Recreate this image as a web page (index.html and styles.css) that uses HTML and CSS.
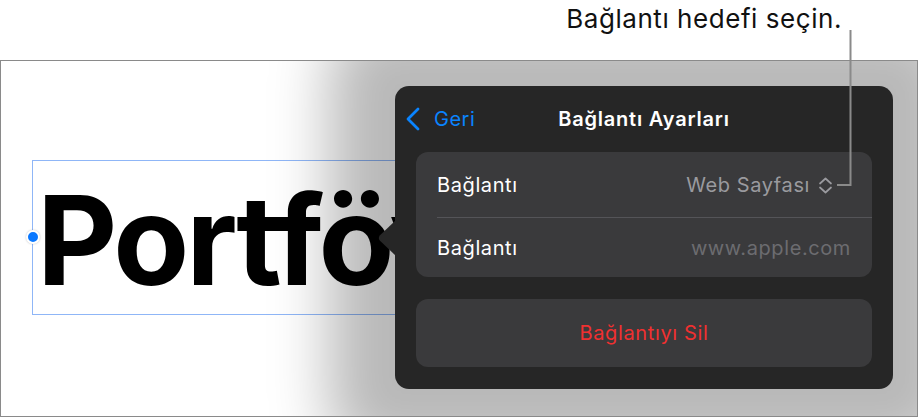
FILE: index.html
```html
<!DOCTYPE html>
<html lang="tr">
<head>
<meta charset="utf-8">
<title>Bağlantı Ayarları</title>
<link rel="stylesheet" href="styles.css">
</head>
<body>
<header class="callout">
  <p class="callout-text">Bağlantı hedefi seçin.</p>
</header>
<main class="canvas">
  <div class="textbox">
    <span class="handle"></span>
    <span class="big-text">Portföy</span>
  </div>
  <section class="popover">
    <svg class="arrow" width="19" height="36" viewBox="0 0 19 36"><path d="M19 0 L3 15.2 Q0.6 18 3 20.8 L19 36 Z" fill="#262626"/></svg>
    <div class="pop-header">
      <div class="back">
        <svg class="back-icon" width="16" height="24" viewBox="0 0 16 24"><path d="M13 2 L3 12 L13 22" fill="none" stroke="#0a84ff" stroke-width="2.8" stroke-linecap="round" stroke-linejoin="round"/></svg>
        <span class="back-label">Geri</span>
      </div>
      <h1 class="pop-title">Bağlantı Ayarları</h1>
      <div></div>
    </div>
    <div class="group">
      <div class="row row-first">
        <span class="row-label">Bağlantı</span>
        <span class="row-value value-select">Web Sayfası<svg class="updown" width="15" height="17" viewBox="0 0 15 17"><path d="M2 6.5 L7.5 1.5 L13 6.5 M2 10.5 L7.5 15.5 L13 10.5" fill="none" stroke="#9a9a9f" stroke-width="1.7" stroke-linecap="round" stroke-linejoin="round"/></svg></span>
      </div>
      <div class="row row-second">
        <span class="row-label">Bağlantı</span>
        <span class="row-value value-dim">www.apple.com</span>
      </div>
    </div>
    <div class="delete">Bağlantıyı Sil</div>
  </section>
</main>
<svg class="leader" width="918" height="418" viewBox="0 0 918 418"><path d="M850.5 30 V185 H837" fill="none" stroke="#8a8a8a" stroke-width="2"/></svg>
</body>
</html>
```
FILE: styles.css
```css
* { box-sizing: border-box; }
html, body { margin: 0; padding: 0; }
body {
  position: relative;
  width: 918px;
  height: 418px;
  overflow: hidden;
  background: #ffffff;
  font-family: "Inter", "Noto Sans", sans-serif;
  color: #000;
}
.callout {
  height: 60px;
  display: flex;
  justify-content: flex-end;
  padding-right: 76px;
  padding-top: 4px;
}
.callout-text {
  margin: 0;
  font-size: 26px;
  line-height: 30px;
  font-weight: 400;
  letter-spacing: 0.55px;
  color: #111;
}
.canvas {
  position: relative;
  width: 918px;
  height: 357px;
  border: 1px solid #8a8a8a;
  overflow: hidden;
  padding: 99px 0 0 31px;
  background: #fff;
}
.textbox {
  position: relative;
  width: 368px;
  height: 155px;
  border: 1px solid #8fb6f7;
  border-right: 0;
  padding: 17px 0 0 4px;
}
.handle {
  position: absolute;
  left: -7px;
  top: 69px;
  width: 14px;
  height: 14px;
  border-radius: 50%;
  background: #0a78ff;
  border: 2px solid #fff;
  box-shadow: 0 0 2px rgba(0,0,0,0.25);
}
.big-text {
  display: block;
  overflow: hidden;
  font-size: 124px;
  line-height: 124px;
  font-weight: 700;
  letter-spacing: -3px;
  white-space: nowrap;
}
.popover {
  position: absolute;
  left: 394px;
  top: 25px;
  width: 498px;
  height: 303px;
  background: #262626;
  border-radius: 14px;
  padding: 0 21px;
  box-shadow: 0 0 60px 66px rgba(0,0,0,0.28);
  color: #fff;
}
.arrow {
  position: absolute;
  left: -18px;
  top: 134px;
}
.pop-header {
  height: 66px;
  display: grid;
  grid-template-columns: 1fr auto 1fr;
  align-items: center;
  margin: 0 -21px;
}
.back {
  display: flex;
  align-items: center;
  padding-left: 10px;
  gap: 13px;
  color: #0a84ff;
}
.back-icon { display: block; }
.back-label {
  font-size: 20px;
  line-height: 24px;
  letter-spacing: 0.5px;
}
.pop-title {
  margin: 0;
  font-size: 20px;
  line-height: 24px;
  font-weight: 600;
  letter-spacing: 0.8px;
  color: #fff;
}
.group {
  background: #3a3a3c;
  border-radius: 12px;
  height: 125px;
}
.row {
  display: flex;
  align-items: center;
  justify-content: space-between;
  margin-left: 21px;
  padding-right: 21px;
}
.row-first { height: 65px; padding-right: 62px; }
.row-second { height: 60px; border-top: 1px solid #545458; }
.row-label {
  font-size: 20px;
  line-height: 24px;
  letter-spacing: 0.6px;
  color: #fff;
}
.row-value {
  font-size: 20px;
  line-height: 24px;
  letter-spacing: 0.6px;
}
.value-select {
  position: relative;
  color: #9a9a9f;
}
.updown {
  position: absolute;
  right: -23px;
  top: 4px;
}
.value-dim { color: #6c6c70; }
.delete {
  margin-top: 22px;
  height: 68px;
  background: #3a3a3c;
  border-radius: 12px;
  display: flex;
  align-items: center;
  justify-content: center;
  color: #f03030;
  font-size: 20px;
  letter-spacing: 0.65px;
}
.leader {
  position: absolute;
  left: 0;
  top: 0;
  pointer-events: none;
}
```
